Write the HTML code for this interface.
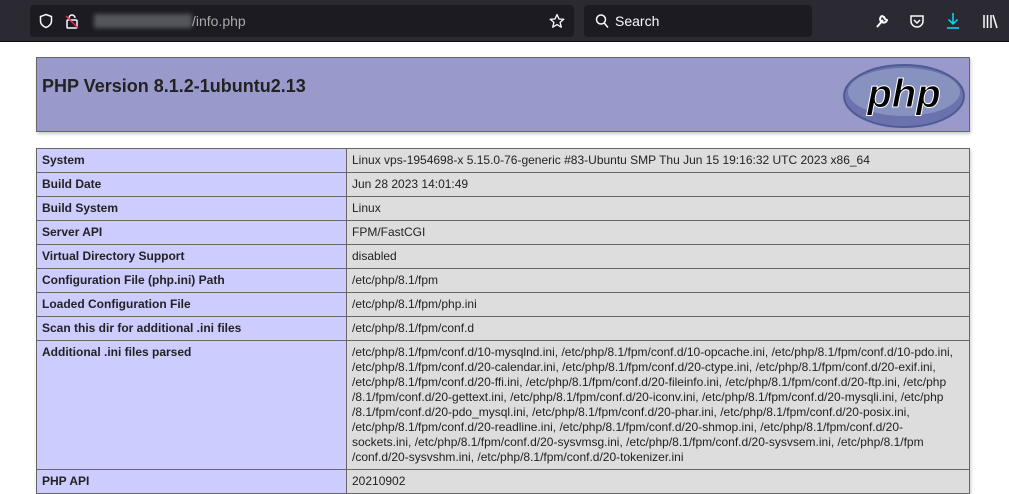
<!DOCTYPE html>
<html><head><meta charset="utf-8"><style>
body{margin:0;width:1009px;height:482px;overflow:hidden;background:#fff;font-family:"Liberation Sans",Arial,sans-serif;}
.bar{position:absolute;left:0;top:0;width:1009px;height:41px;background:#2b2a33;border-bottom:1px solid #0c0c0d;}
.url{position:absolute;left:30px;top:5px;width:544px;height:32px;background:#1c1b22;border-radius:4px;}
.srch{position:absolute;left:584px;top:5px;width:228px;height:32px;background:#1c1b22;border-radius:4px;}
.t{position:absolute;color:#fbfbfe;font-size:14px;}
.hdr{position:absolute;left:36px;top:57px;width:932px;height:73px;background:#9999cc;border:1px solid #666;box-shadow:1px 2px 3px #ccc;}
.hdr h1{margin:0;position:absolute;left:5px;top:18px;font-size:18px;font-weight:bold;color:#222;}
table{position:absolute;left:36px;top:148px;border-collapse:collapse;width:934px;box-shadow:1px 2px 3px #ccc;}
td{border:1px solid #666;font-size:12px;padding:4px 5px;vertical-align:baseline;height:15px;line-height:15px;color:#222;}
td.e{background:#ccccff;font-weight:bold;width:299px;}
td.v{background:#ddd;}
</style></head><body>
<div class="bar">
 <div class="url">
  <svg style="position:absolute;left:8px;top:8px" width="16" height="16" viewBox="0 0 16 16"><path d="M8 1.5 L13.5 3.5 V8 C13.5 11 11 13.5 8 14.5 C5 13.5 2.5 11 2.5 8 V3.5 Z" fill="none" stroke="#fbfbfe" stroke-width="1.5"/></svg>
  <svg style="position:absolute;left:34px;top:8px" width="16" height="16" viewBox="0 0 16 16"><rect x="3" y="7" width="10" height="8" rx="1" fill="none" stroke="#fbfbfe" stroke-width="1.5"/><path d="M5 7 V5 a3 3 0 0 1 6 0" fill="none" stroke="#fbfbfe" stroke-width="1.5"/><path d="M2 3 L14 15" stroke="#e22850" stroke-width="1.5"/></svg>
  <div style="position:absolute;left:64px;top:9px;width:98px;height:14px;background:#55555c;filter:blur(2px)"></div>
  <span class="t" style="left:162px;top:8px;color:#aaa">/info.php</span>
  <svg style="position:absolute;left:519px;top:8px" width="16" height="16" viewBox="0 0 16 16"><path d="M8 1.5 L10 6 L14.8 6.3 L11.1 9.4 L12.3 14.2 L8 11.6 L3.7 14.2 L4.9 9.4 L1.2 6.3 L6 6 Z" fill="none" stroke="#fbfbfe" stroke-width="1.3" stroke-linejoin="round"/></svg>
 </div>
 <div class="srch">
  <svg style="position:absolute;left:10px;top:8px" width="16" height="16" viewBox="0 0 16 16"><circle cx="7" cy="6.5" r="4.5" fill="none" stroke="#fbfbfe" stroke-width="1.5"/><path d="M10.2 10 L14 14.5" stroke="#fbfbfe" stroke-width="1.5"/></svg>
  <span class="t" style="left:31px;top:8px">Search</span>
 </div>
 <svg style="position:absolute;left:874px;top:13px" width="16" height="16" viewBox="0 0 16 16"><path d="M3 14 L9 7 M8 3 a3.5 3.5 0 1 0 5 4 L11 6 L10 4 Z" fill="none" stroke="#fbfbfe" stroke-width="2"/></svg>
 <svg style="position:absolute;left:909px;top:13px" width="16" height="16" viewBox="0 0 16 16"><path d="M2 3 H14 V8 a6 6 0 0 1 -12 0 Z" fill="none" stroke="#fbfbfe" stroke-width="1.5"/><path d="M5 7 L8 10 L11 7" fill="none" stroke="#fbfbfe" stroke-width="1.5"/></svg>
 <svg style="position:absolute;left:945px;top:12px" width="16" height="18" viewBox="0 0 16 18"><path d="M8 1 V12 M3.5 7.5 L8 12 L12.5 7.5 M2 16 H14" fill="none" stroke="#00ddff" stroke-width="1.5"/></svg>
 <svg style="position:absolute;left:982px;top:13px" width="16" height="16" viewBox="0 0 16 16"><path d="M2 2 V15 M5.5 2 V15 M9 2 V15 M11 2 L15 15" fill="none" stroke="#fbfbfe" stroke-width="1.5"/></svg>
</div>
<div class="hdr"><h1>PHP Version 8.1.2-1ubuntu2.13</h1>
 <svg style="position:absolute;left:806px;top:6px" width="122" height="64" viewBox="0 0 122 64"><ellipse cx="61" cy="32" rx="60" ry="31" fill="#6c72ae" stroke="#4f5b93" stroke-width="2"/><ellipse cx="61" cy="28" rx="56" ry="24" fill="#8892bf"/><text x="61" y="43" text-anchor="middle" font-family="Liberation Sans,sans-serif" font-style="italic" font-weight="bold" font-size="40" fill="#000" stroke="#fff" stroke-width="1">php</text></svg>
</div>
<table>
<tr><td class="e">System</td><td class="v">Linux vps-1954698-x 5.15.0-76-generic #83-Ubuntu SMP Thu Jun 15 19:16:32 UTC 2023 x86_64</td></tr>
<tr><td class="e">Build Date</td><td class="v">Jun 28 2023 14:01:49</td></tr>
<tr><td class="e">Build System</td><td class="v">Linux</td></tr>
<tr><td class="e">Server API</td><td class="v">FPM/FastCGI</td></tr>
<tr><td class="e">Virtual Directory Support</td><td class="v">disabled</td></tr>
<tr><td class="e">Configuration File (php.ini) Path</td><td class="v">/etc/php/8.1/fpm</td></tr>
<tr><td class="e">Loaded Configuration File</td><td class="v">/etc/php/8.1/fpm/php.ini</td></tr>
<tr><td class="e">Scan this dir for additional .ini files</td><td class="v">/etc/php/8.1/fpm/conf.d</td></tr>
<tr><td class="e">Additional .ini files parsed</td><td class="v">/etc/php/8.1/fpm/conf.d/10-mysqlnd.ini, /etc/php/8.1/fpm/conf.d/10-opcache.ini, /etc/php/8.1/fpm/conf.d/10-pdo.ini,<br>/etc/php/8.1/fpm/conf.d/20-calendar.ini, /etc/php/8.1/fpm/conf.d/20-ctype.ini, /etc/php/8.1/fpm/conf.d/20-exif.ini,<br>/etc/php/8.1/fpm/conf.d/20-ffi.ini, /etc/php/8.1/fpm/conf.d/20-fileinfo.ini, /etc/php/8.1/fpm/conf.d/20-ftp.ini, /etc/php<br>/8.1/fpm/conf.d/20-gettext.ini, /etc/php/8.1/fpm/conf.d/20-iconv.ini, /etc/php/8.1/fpm/conf.d/20-mysqli.ini, /etc/php<br>/8.1/fpm/conf.d/20-pdo_mysql.ini, /etc/php/8.1/fpm/conf.d/20-phar.ini, /etc/php/8.1/fpm/conf.d/20-posix.ini,<br>/etc/php/8.1/fpm/conf.d/20-readline.ini, /etc/php/8.1/fpm/conf.d/20-shmop.ini, /etc/php/8.1/fpm/conf.d/20-<br>sockets.ini, /etc/php/8.1/fpm/conf.d/20-sysvmsg.ini, /etc/php/8.1/fpm/conf.d/20-sysvsem.ini, /etc/php/8.1/fpm<br>/conf.d/20-sysvshm.ini, /etc/php/8.1/fpm/conf.d/20-tokenizer.ini</td></tr>
<tr><td class="e">PHP API</td><td class="v">20210902</td></tr>
</table>
</body></html>
